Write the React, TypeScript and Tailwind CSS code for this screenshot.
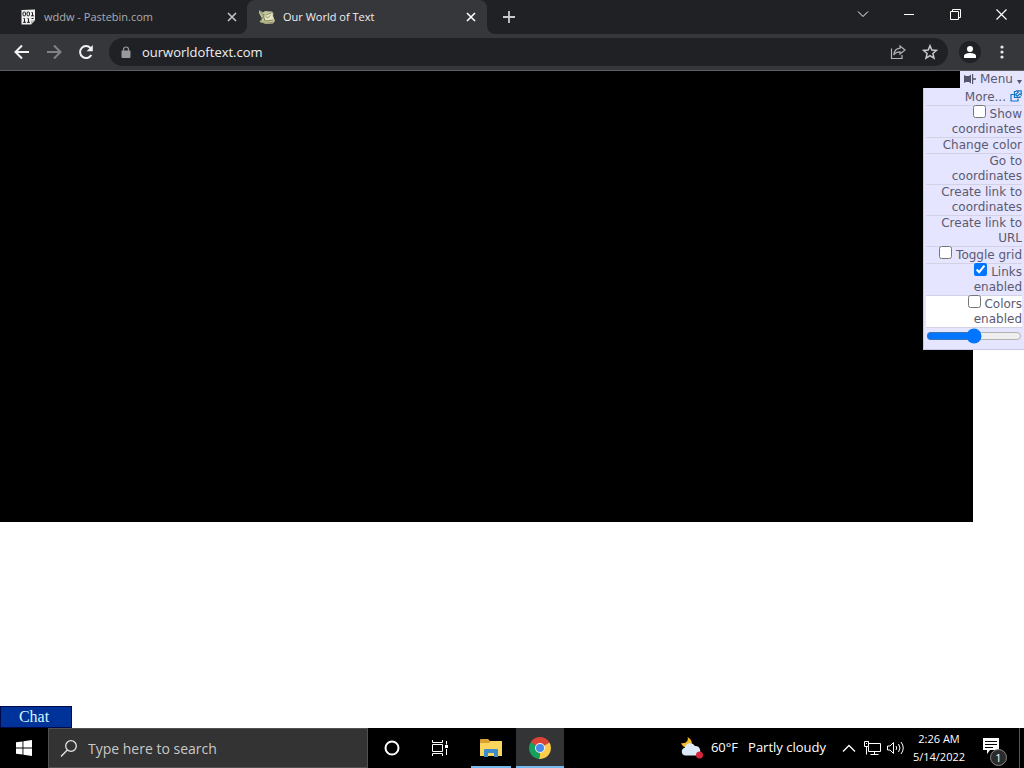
import type { ReactNode } from "react";

const ui = "font-['Open_Sans','Noto_Sans',sans-serif]";

function CloseIcon() {
  return (
    <svg width="10" height="10" viewBox="0 0 10 10" fill="none" stroke="currentColor" strokeWidth="1.6">
      <path d="M1 1l8 8M9 1L1 9" />
    </svg>
  );
}

function PastebinIcon() {
  return (
    <svg width="16" height="16" viewBox="0 0 16 16" className="ml-px">
      <path d="M.5 1L14 .5V11l-4 4.500H.5z" fill="#eeeeee" />
      <path d="M10 15.500V11.500h4z" fill="#b5b5b5" />
      <g fill="none" stroke="#222" strokeWidth="1">
        <rect x="2" y="3" width="2.500" height="3.800" rx="1" />
        <rect x="6" y="3" width="2.500" height="3.800" rx="1" />
        <path d="M10.500 3.500h1V7M10 6.800h3M2.500 9.500h1v4M2 13.300h3M6.500 9.500h1v4M6 13.300h3M10.500 9.500h2" />
      </g>
    </svg>
  );
}

function MapIcon() {
  return (
    <svg width="16" height="16" viewBox="0 0 16 16">
      <path d="M0 1l4 2.500L6 2l7 .5 1.500 2-.5 2 2 5.500-2 2.500-7 .5-3-1L.5 13 3 9.500 0 4z" fill="#bfc19a" />
      <path d="M5 5l8-1 1.500 7-8 1z" fill="#e4e6c2" />
      <path d="M0 1l3.500 4.500 3 .5 6-2M4 6l2 6 8-1M3.500 8l-1.500 4M6.500 7l2 2 3-2.500" fill="none" stroke="#77774f" strokeWidth=".8" />
      <path d="M2 13l4.500 1.200 8-1" fill="none" stroke="#9b9668" />
    </svg>
  );
}

function BrowserTabs() {
  return (
    <header className="flex h-[34px] bg-[#202124] text-[#dfe1e5]">
      <div className="flex w-[247px] items-center pr-2.5 pl-5">
        <PastebinIcon />
        <span className="ml-[7px] flex-1 text-[11px] text-[#a9acb1]">wddw - Pastebin.com</span>
        <button aria-label="Close wddw tab" className="grid size-2.5 place-items-center text-[#c4c6ca]"><CloseIcon /></button>
      </div>
      <div className="relative flex w-60 items-center rounded-t-lg bg-[#36373b] pr-[11px] pl-3">
        <svg className="absolute bottom-0 -left-2" width="8" height="8"><path d="M8 0v8H0a8 8 0 0 0 8-8" fill="#36373b" /></svg>
        <svg className="absolute -right-2 bottom-0" width="8" height="8"><path d="M0 0v8h8a8 8 0 0 1-8-8" fill="#36373b" /></svg>
        <MapIcon />
        <span className="ml-2 flex-1 text-[11px] text-[#eeeff1]">Our World of Text</span>
        <button aria-label="Close Our World of Text tab" className="grid size-2.5 place-items-center text-white"><CloseIcon /></button>
      </div>
      <button aria-label="New tab" className="ml-[15px] grid w-3.5 place-items-center">
        <svg width="14" height="14" fill="none" stroke="#c8cacd" strokeWidth="1.8"><path d="M7 1v12M1 7h12" /></svg>
      </button>
      <div className="ml-auto flex items-start text-white">
        <button aria-label="Search tabs" className="grid h-7 w-[46px] place-items-center">
          <svg width="12" height="8" fill="none" stroke="currentColor"><path d="M1 1.500l5 5 5-5" /></svg>
        </button>
        <button aria-label="Minimize" className="grid h-7 w-[46px] place-items-center">
          <svg width="10" height="10" fill="none" stroke="currentColor"><path d="M0 5.500h10" /></svg>
        </button>
        <button aria-label="Restore" className="grid h-7 w-[46px] place-items-center">
          <svg width="11" height="11" fill="none" stroke="currentColor"><path d="M.5 2.500h8v8h-8zM2.500 2.500v-2h8v8H8.500" /></svg>
        </button>
        <button aria-label="Close window" className="grid h-7 w-[46px] place-items-center">
          <svg width="11" height="11" fill="none" stroke="currentColor" strokeWidth="1.200"><path d="M.5.5l10 10M10.500.5l-10 10" /></svg>
        </button>
      </div>
    </header>
  );
}

function Toolbar() {
  return (
    <nav aria-label="Browser toolbar" className="flex h-[37px] items-center border-b border-[#5c5d60] bg-[#36373b] pr-5 pl-3.5 text-white">
      <button aria-label="Back" className="mr-4">
        <svg width="16" height="16" fill="none" stroke="#f2f2f3" strokeWidth="2"><path d="M15 8H2M8 1.500L1.500 8 8 14.500" /></svg>
      </button>
      <button aria-label="Forward" className="mr-4">
        <svg width="16" height="16" fill="none" stroke="#828387" strokeWidth="2"><path d="M1 8h13M8 1.500L14.500 8 8 14.500" /></svg>
      </button>
      <button aria-label="Reload" className="mr-[15px]">
        <svg width="16" height="16" fill="none" stroke="#f2f2f3" strokeWidth="2">
          <path d="M13.300 11A6 6 0 1 1 12.500 4" /><path d="M14.800 1v6.200H8.600z" fill="#f2f2f3" stroke="none" />
        </svg>
      </button>
      <div className="flex h-7 flex-1 items-center rounded-full bg-[#202124] pr-2.5 pl-3">
        <svg width="10" height="13" viewBox="0 0 10 13" className="shrink-0">
          <rect x=".5" y="4.500" width="9" height="7.500" rx="1" fill="#98999c" />
          <path d="M2.500 5.500V3.500a2.500 2.500 0 0 1 5 0v2" fill="none" stroke="#98999c" strokeWidth="1.200" />
        </svg>
        <input aria-label="Address" defaultValue="ourworldoftext.com" className="ml-[11px] min-w-0 flex-1 bg-transparent pt-0.5 text-[13px] text-[#eeeff1] outline-none" />
        <button aria-label="Share" className="mr-4">
          <svg width="16" height="16" fill="none" stroke="#b4b6ba" strokeWidth="1.200">
            <path d="M1.500 4.500v10h10.500v-3.500M10 2l5 4-5 4V7.800C7 7.800 5 8.800 3.800 11 4.200 7 6.500 4.500 10 4.200z" />
          </svg>
        </button>
        <button aria-label="Bookmark">
          <svg width="16" height="16" fill="none" stroke="#c9cacd" strokeWidth="1.500">
            <path d="M8 1.700l1.800 4.300 4.700.4-3.600 3.100 1.100 4.600L8 11.700 4 14.100l1.100-4.600L1.500 6.400 6.200 6z" />
          </svg>
        </button>
      </div>
      <button aria-label="Profile" className="ml-[11px] grid size-[22px] place-items-center rounded-full bg-[#202124]">
        <svg width="14" height="14" fill="white"><circle cx="7" cy="4" r="3" /><path d="M1 13v-2c0-2.200 4-3 6-3s6 .8 6 3v2z" /></svg>
      </button>
      <button aria-label="Browser menu" className="ml-[19px]">
        <svg width="4" height="14" fill="#e8e8ea"><circle cx="2" cy="2" r="1.600" /><circle cx="2" cy="7" r="1.600" /><circle cx="2" cy="12" r="1.600" /></svg>
      </button>
    </nav>
  );
}

function MenuButton({ children }: { children: ReactNode }) {
  return <li className="border-b border-[#d2d2e4]"><button className="block w-full text-right">{children}</button></li>;
}

function MenuCheck({ children, checked = false, hovered = false }: { children: ReactNode; checked?: boolean; hovered?: boolean }) {
  return (
    <li className={hovered ? "border-b border-[#d2d2e4] bg-white" : "border-b border-[#d2d2e4]"}>
      <label className="block">
        <input type="checkbox" defaultChecked={checked} className="-mt-px size-[13px] align-baseline" /> {children}
      </label>
    </li>
  );
}

function WorldMenu() {
  return (
    <aside className="absolute top-0 right-0 flex w-[101px] flex-col items-end font-['DejaVu_Sans',sans-serif] text-xs leading-[15px] text-[#5b5a70]">
      <button className="flex h-[17px] w-16 items-center bg-[#e5e5ff] pr-0.5 pl-1">
        <svg width="12" height="10" fill="#55546a" className="mb-0.5"><path d="M0 1l2 1h3l2-1.500v9L5 8H2L0 9zM8 0h1.200v4.300H12v1.400H9.200V10H8z" /></svg>
        <span className="ml-1">Menu</span>
        <svg width="5" height="4" className="mt-1 ml-auto" fill="#55546a"><path d="M0 0h5L2.500 4z" /></svg>
      </button>
      <div className="w-full border-b border-l border-[#c9c9e6] bg-[#e5e5ff] pr-0.5 pb-[5px] pl-0.5">
        <ul className="text-right">
          <li className="border-b border-[#d2d2e4] pt-0.5">
            <a href="#more" className="flex items-start justify-end gap-1">
              More...
              <svg width="12" height="12" fill="none" stroke="#1473c4" strokeWidth="1.200">
                <path d="M4 4.500H1V11h7V8.500" /><path d="M6.500 1.500h-2V7.500H10V6" /><path d="M7 .8h4.200V5L9.800 3.800 7.200 6.400 5.600 4.800 8.200 2.200z" fill="#e5f3ff" />
              </svg>
            </a>
          </li>
          <MenuCheck>Show coordinates</MenuCheck>
          <MenuButton>Change color</MenuButton>
          <MenuButton>Go to coordinates</MenuButton>
          <MenuButton>Create link to coordinates</MenuButton>
          <MenuButton>Create link to URL</MenuButton>
          <MenuCheck>Toggle grid</MenuCheck>
          <MenuCheck checked>Links enabled</MenuCheck>
          <MenuCheck hovered>Colors enabled</MenuCheck>
        </ul>
        <input type="range" aria-label="Zoom" defaultValue={50} className="block h-4 w-full" />
      </div>
    </aside>
  );
}

function WorldPage() {
  return (
    <main className="relative flex flex-1 flex-col justify-between bg-white">
      <div className="h-[451px] w-[95%] bg-black" />
      <WorldMenu />
      <button className="h-[22px] w-[72px] border border-[#000a4a] bg-[#003399] pr-1 text-center font-['Liberation_Serif',serif] text-base leading-5 text-[#dcf4ff]">Chat</button>
    </main>
  );
}

function Taskbar() {
  return (
    <footer className="flex h-10 items-center bg-black text-white">
      <button aria-label="Start" className="grid h-10 w-12 place-items-center">
        <svg width="16" height="16" fill="white"><path d="M0 2.300l6.500-.9v6.100H0zM7.400 1.200L16 0v7.500H7.400zM0 8.400h6.500v6.200L0 13.700zM7.400 8.400H16V16l-8.600-1.200z" /></svg>
      </button>
      <label className="flex h-10 w-80 items-center border border-[#505050] bg-[#333333] pl-[11px]">
        <svg width="17" height="17" fill="none" stroke="#e6e6e6" strokeWidth="1.300"><circle cx="11" cy="6" r="5.300" /><path d="M7.300 10L1 16.500" /></svg>
        <input aria-label="Search" placeholder="Type here to search" className="ml-[11px] min-w-0 flex-1 bg-transparent pt-0.5 text-sm outline-none placeholder:text-[#c8c8c8]" />
      </label>
      <button aria-label="Cortana" className="grid h-10 w-12 place-items-center">
        <svg width="16" height="16" fill="none" stroke="white" strokeWidth="2"><circle cx="8" cy="8" r="6.500" /></svg>
      </button>
      <button aria-label="Task view" className="grid h-10 w-12 place-items-center">
        <svg width="17" height="16" fill="none" stroke="white"><path d="M.5 4.500h10v7H.5zM.5 0v2.500h10V0M.5 16v-2.500h10V16M14.500 1v3.500M14.500 9v6" /><path d="M13 5h3v3h-3z" fill="white" stroke="none" /></svg>
      </button>
      <button aria-label="File Explorer" className="mr-[5px] ml-[7px] grid h-10 w-10 place-items-center border-b-2 border-[#76b9ed] pt-0.5">
        <svg width="22" height="19" viewBox="0 0 22 19">
          <path d="M0 1q0-1 1-1h7l2 2h11q1 0 1 1v14H0z" fill="#dda032" /><path d="M0 4h9l2-2h11v15H0z" fill="#fbd55c" /><path d="M4 18V11q0-1 1-1h12q1 0 1 1v7h-4v-4H8v4z" fill="#3e8dca" />
        </svg>
      </button>
      <button aria-label="Chrome" className="grid h-10 w-12 place-items-center border-b-2 border-[#76b9ed] bg-[#333436] pt-0.5">
        <svg width="22" height="22" viewBox="0 0 22 22">
          <path d="M11 11L1.500 5.500A11 11 0 0 1 20.500 5.500z" fill="#dc4437" /><path d="M11 11L20.500 5.500A11 11 0 0 1 11 22z" fill="#fdcd4b" /><path d="M11 11v11A11 11 0 0 1 1.500 5.500z" fill="#18a05e" />
          <path d="M11 6h9.800l-.3-.5L11 5z" fill="#dc4437" /><path d="M15.500 13.500L11 22l-1.200-.1 4-8z" fill="#fdcd4b" /><path d="M1.500 5.500l5 8L11 11z" fill="#18a05e" />
          <circle cx="11" cy="11" r="5" fill="#f1f1f1" /><circle cx="11" cy="11" r="4" fill="#4a89ec" />
        </svg>
      </button>
      <div className="ml-auto flex h-10 items-center">
        <button className="flex items-center text-[13px]">
          <svg width="23" height="22" viewBox="0 0 23 22">
            <path d="M7.500 0C9 3.500 6 7 1 6c1 3 3.500 4.500 6.500 4.500C12 10.500 14.500 4 7.500 0z" fill="#f4b92b" />
            <path d="M5 18.500a4 4 0 0 1-.2-7.800A5.500 5.500 0 0 1 15 9a4.900 4.900 0 0 1 2 9.500z" fill="#dce9f7" />
            <circle cx="19.500" cy="18" r="3.500" fill="#d6243b" />
          </svg>
          <span className="ml-2">60°F</span><span className="ml-2.5">Partly cloudy</span>
        </button>
        <button aria-label="Show hidden icons" className="ml-4"><svg width="14" height="9" fill="none" stroke="white" strokeWidth="1.300"><path d="M1 7.500l6-6 6 6" /></svg></button>
        <button aria-label="Network" className="ml-2"><svg width="17" height="15" fill="none" stroke="white"><path d="M5 2.500h11.500v8H4.500V6M.5.500h4v5h-4zM2.500 6v7.500M10.500 10.500v3M6.500 13.500h8M2 2.500h1" /></svg></button>
        <button aria-label="Volume" className="ml-1.5"><svg width="18" height="14" fill="none" stroke="white"><path d="M.5 5h2.500l3.500-3.500v11L3 9H.5zM9 5q1.500 2 0 4M11.500 3q3 4 0 8M14 1q4.500 6 0 12" /></svg></button>
        <time className="ml-px w-[66px] text-center text-[11px] leading-[18px]">2:26 AM<br />5/14/2022</time>
        <button aria-label="Notifications, 1 new" className="relative ml-[11px] h-8 w-6">
          <svg width="17" height="17" className="-mt-1" fill="white"><path fillRule="evenodd" d="M0 0h16v12H7l-3 4v-4H0zM2 3h12v1H2zM2 6h12v1H2zM2 9h8v1H2z" /></svg>
          <span className="absolute right-0 -bottom-0.5 grid size-[17px] place-items-center rounded-full border border-[#888] bg-[#2b2b2b] text-[11px] leading-none">1</span>
        </button>
        <div className="mr-1 ml-3 h-10 w-px bg-[#555]" />
      </div>
    </footer>
  );
}

export default function App() {
  return (
    <div className={`flex min-h-screen flex-col ${ui}`}>
      <BrowserTabs />
      <Toolbar />
      <WorldPage />
      <Taskbar />
    </div>
  );
}
